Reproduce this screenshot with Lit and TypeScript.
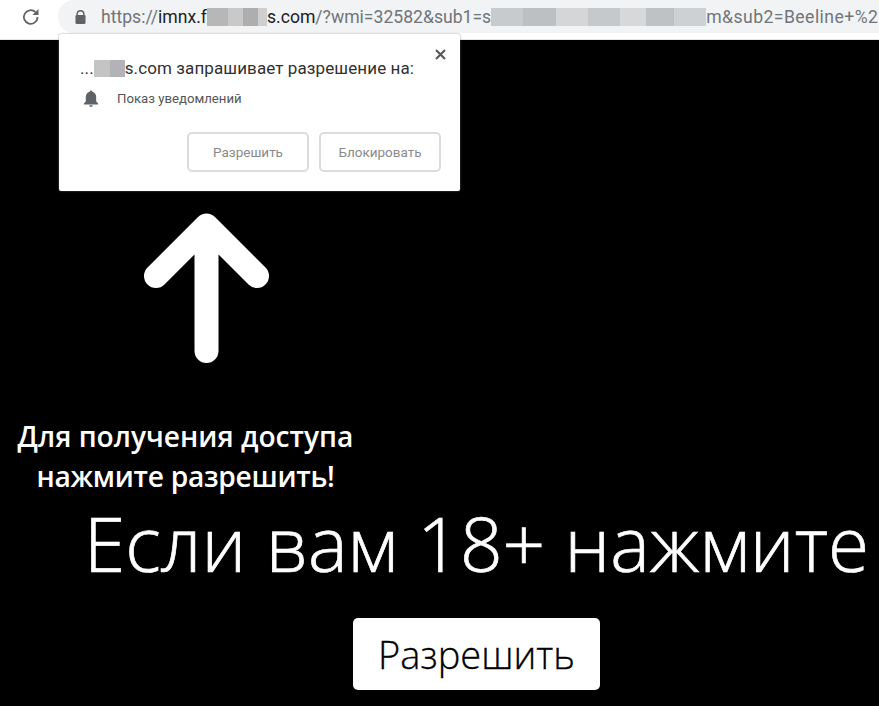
import { LitElement, html, css } from "lit";
import { customElement } from "lit/decorators.js";

@customElement("app-root")
export class AppRoot extends LitElement {
  static styles = css`
    :host { display: block; width: 879px; height: 706px; position: relative; overflow: hidden; background: #000; font-family: "Open Sans", "Noto Sans", sans-serif; }
    .toolbar { height: 40px; box-sizing: border-box; background: #fff; border-bottom: 1px solid #e4e4e4; display: flex; align-items: flex-start; overflow: hidden; }
    .reload { width: 58px; flex: none; height: 33px; display: flex; align-items: center; padding-left: 22px; box-sizing: border-box; }
    .omni { flex: 1; min-width: 0; height: 33px; background: #f1f3f4; border-radius: 16px 0 0 16px; display: flex; align-items: center; padding-left: 17px; white-space: nowrap; overflow: hidden; font: 17.6px "Roboto", "Liberation Sans", sans-serif; color: #70757a; }
    .lock { flex: none; margin-right: 15px; }
    .dark { color: #202124; }
    .tail { letter-spacing: .45px; }
    .blur { display: inline-block; height: 18px; vertical-align: -3px; }
    .b1 { width: 60px; background: linear-gradient(90deg, #b7b7b7 0 35%, #c9c9c9 35% 60%, #aeaeae 60% 85%, #cfcfcf 85%); }
    .b2 { width: 215px; background: linear-gradient(90deg, #c8cbcd 0 15%, #bdc0c3 15% 30%, #d4d6d8 30% 45%, #c6c9cb 45% 60%, #d6d8da 60% 72%, #bfc2c5 72% 85%, #ced1d3 85%); }
    .popup { position: absolute; left: 59px; top: 34px; width: 401px; height: 157px; box-sizing: border-box; background: #fff; border-radius: 2px; box-shadow: 0 0 2px rgba(120,120,120,.9); padding: 22px 19px 0 21px; color: #333; }
    .close { position: absolute; right: 14px; top: 15px; }
    .title { font: 17px/24px "Roboto", "Liberation Sans", sans-serif; letter-spacing: .1px; color: #303030; white-space: nowrap; }
    .b3 { width: 31px; height: 17px; background: linear-gradient(90deg, #c4c4c4 0 50%, #b2b2b8 50%); vertical-align: -3px; }
    .perm { display: flex; align-items: center; margin-top: 9px; height: 20px; font: 13.2px/20px "Roboto", "Liberation Sans", sans-serif; color: #555; }
    .perm svg { margin: 0 18px 0 3px; flex: none; }
    .actions { display: flex; justify-content: flex-end; gap: 10px; margin-top: 23px; }
    .actions button { width: 122px; height: 40px; box-sizing: border-box; background: #fff; border: 2px solid #dcdcdc; border-radius: 5px; font: 13.5px "Roboto", "Liberation Sans", sans-serif; color: #8a8a8a; padding: 0; }
    main { display: flex; flex-direction: column; align-items: flex-start; color: #fff; }
    .arrow { display: block; margin: 172px 0 0 143px; }
    .lead { width: 371px; margin-top: 52px; text-align: center; font: 600 28.2px/40px "Open Sans", sans-serif; }
    .l2 { letter-spacing: -.3px; }
    .big { align-self: stretch; margin-top: 1px; padding-left: 84px; font: 300 74.7px/92px "Open Sans", sans-serif; -webkit-text-stroke: .7px #fff; white-space: nowrap; }
    .cta { align-self: flex-start; margin: 29px 0 0 353px; width: 247px; height: 72px; background: #fff; border: 0; border-radius: 5px; font: 300 38px "Open Sans", sans-serif; -webkit-text-stroke: .3px #000; color: #000; padding: 0; }
  `;

  render() {
    return html`
      <div class="toolbar">
        <div class="reload">
          <svg width="18" height="18" viewBox="0 0 18 18" fill="none"><path d="M15.500 9a6.800 6.800 0 1 1-2-4.800" stroke="#5f6368" stroke-width="1.800"/><path d="M16.500 1v6h-6z" fill="#5f6368"/></svg>
        </div>
        <div class="omni">
          <svg class="lock" width="11" height="14" viewBox="0 0 11 14"><path d="M2.200 5.500V4a3.300 3.300 0 0 1 6.600 0v1.500" fill="none" stroke="#5f6368" stroke-width="1.400"/><rect x=".5" y="5" width="10" height="9" rx="1.200" fill="#5f6368"/></svg>
          <span>https://<span class="dark">imnx.f<span class="blur b1"></span>s.com</span>/?wmi=32582&amp;sub1=s<span class="blur b2"></span><span class="tail">m&amp;sub2=Beeline+%2</span></span>
        </div>
      </div>
      <main>
        <svg class="arrow" width="127" height="152" viewBox="0 0 127 152" fill="none" stroke="#fff" stroke-width="24" stroke-linecap="round" stroke-linejoin="round"><path d="M63.500 139V14M13 64 63.500 13.500 114 64" /></svg>
        <div class="lead">Для получения доступа<br /><span class="l2">нажмите разрешить!</span></div>
        <div class="big">Если вам 18+ нажмите</div>
        <button class="cta">Разрешить</button>
      </main>
      <div class="popup">
        <svg class="close" width="11" height="11" viewBox="0 0 11 11"><path d="M1 1l9 9M10 1l-9 9" stroke="#555" stroke-width="2"/></svg>
        <div class="title">...<span class="blur b3"></span>s.com запрашивает разрешение на:</div>
        <div class="perm">
          <svg width="16" height="18" viewBox="0 0 16 18"><path d="M8 .5c.8 0 1.400.6 1.400 1.300 2.500.6 3.800 2.700 3.800 5.300v4.300l2 2.200v.9H.8v-.9l2-2.200V7.100c0-2.600 1.300-4.700 3.800-5.300C6.600 1.100 7.200.5 8 .5zM6.200 15.300h3.600a1.800 1.800 0 0 1-3.600 0z" fill="#5f6368"/></svg>
          Показ уведомлений
        </div>
        <div class="actions"><button>Разрешить</button><button>Блокировать</button></div>
      </div>
    `;
  }
}
